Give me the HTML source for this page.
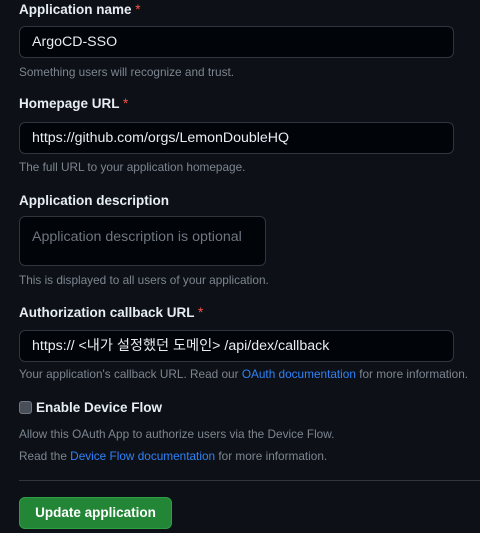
<!DOCTYPE html>
<html><head><meta charset="utf-8"><style>
body{margin:0;background:#0d1117;width:480px;height:533px;overflow:hidden;font-family:"Liberation Sans","Noto Sans CJK KR",sans-serif;color:#e6edf3;position:relative}
.a{position:absolute;white-space:nowrap}
.l{font-size:13.5px;font-weight:bold;color:#e6edf3}
.l span{color:#f85149;font-weight:normal}
.in{position:absolute;left:19px;width:435px;height:30px;background:#010409;border:1px solid #30363d;border-radius:6px;box-sizing:border-box;font-size:14.2px;line-height:28px;padding-left:12px;color:#e6edf3}
.h{font-size:11.8px;color:#7d8590}
a{color:#2f81f7;text-decoration:none}
</style></head><body>
<div class="a l" style="left:19px;top:2px">Application name <span>*</span></div>
<div class="in" style="top:26px;height:32px;line-height:30px">ArgoCD-SSO</div>
<div class="a h" style="left:19px;top:65px">Something users will recognize and trust.</div>
<div class="a l" style="left:19px;top:96px">Homepage URL <span>*</span></div>
<div class="in" style="top:122px;height:32px;line-height:30px">https://github.com/orgs/LemonDoubleHQ</div>
<div class="a h" style="left:19px;top:160px">The full URL to your application homepage.</div>
<div class="a l" style="left:19px;top:193px">Application description</div>
<div class="in" style="top:216px;width:247px;height:50px;line-height:40px;color:#6e7681">Application description is optional</div>
<div class="a h" style="left:19px;top:273px">This is displayed to all users of your application.</div>
<div class="a l" style="left:19px;top:305px">Authorization callback URL <span>*</span></div>
<div class="in" style="top:330px;height:32px;line-height:30px">https:// &lt;내가 설정했던 도메인&gt; /api/dex/callback</div>
<div class="a h" style="left:19px;top:367px">Your application's callback URL. Read our <a>OAuth documentation</a> for more information.</div>
<div class="a" style="left:19px;top:401px;width:13px;height:13px;border:1px solid #6e7681;background:#484f58;border-radius:3px;box-sizing:border-box"></div>
<div class="a l" style="left:36px;top:400px">Enable Device Flow</div>
<div class="a h" style="left:19px;top:427px">Allow this OAuth App to authorize users via the Device Flow.</div>
<div class="a h" style="left:19px;top:449px">Read the <a>Device Flow documentation</a> for more information.</div>
<div class="a" style="left:19px;top:480px;width:461px;height:1px;background:#30363d"></div>
<div class="a" style="left:19px;top:497px;width:153px;height:32px;background:#238636;border:1px solid #2ea043;border-radius:6px;box-sizing:border-box;font-size:13.5px;font-weight:bold;color:#fff;text-align:center;line-height:30px">Update application</div>
</body></html>
